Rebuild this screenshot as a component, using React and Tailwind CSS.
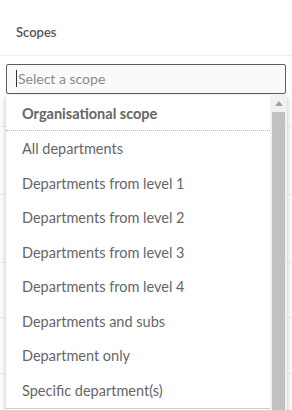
import React from 'react';

const options = [
    'All departments',
    'Departments from level 1',
    'Departments from level 2',
    'Departments from level 3',
    'Departments from level 4',
    'Departments and subs',
    'Department only',
    'Specific department(s)',
];

export default function App() {
    return (
        <div className="w-[292px] h-[410px] bg-white overflow-hidden relative text-[#666]" style={{ fontFamily: 'Lato, "Noto Sans", sans-serif' }}>
            <div className="h-[56px] flex items-center px-4 pt-[10px] border-b border-[#eeeeee]">
                <span className="text-[13px] font-semibold text-[#555]">Scopes</span>
            </div>

            <div className="px-[6px] pt-[8px]">
                <div className="h-[30px] border border-[#5f5f5f] rounded-[2px] bg-[#fafafa] flex items-center pl-[9px] pb-px">
                    <span className="w-px h-[17px] bg-[#333] mr-px"></span>
                    <span className="text-[14px] text-[#8a8a8a]">Select a scope</span>
                </div>
            </div>

            {/* background table rows */}
            <div className="flex flex-col">
                <div className="h-[33px] border-b border-[#eeeeee]"></div>
                <div className="h-[68px] border-b border-[#eeeeee]"></div>
                <div className="h-[68px] border-b border-[#eeeeee]"></div>
                <div className="h-[55px] border-b border-[#eeeeee]"></div>
                <div className="h-[56px] border-b border-[#eeeeee]"></div>
            </div>

            <div className="absolute left-[6px] top-[95px] w-[281px] h-[320px] bg-white flex shadow-[0_2px_6px_rgba(0,0,0,0.25)]">
                <div className="flex-1 flex flex-col overflow-hidden">
                    <div className="h-[36px] shrink-0 flex items-center px-4 pt-[3px] border-b border-dotted border-[#bbbbbb] text-[14.5px] font-bold text-[#666]">
                        Organisational scope
                    </div>
                    {options.map((o) => (
                        <div key={o} className="h-[34.5px] shrink-0 flex items-center px-4 pt-[2px] text-[14.5px] text-[#666]">
                            {o}
                        </div>
                    ))}
                    <div className="shrink-0 mt-[0.5px] border-t border-[#cccccc] h-[10px]"></div>
                </div>
                <div className="w-[17px] bg-[#f1f1f1] flex flex-col items-center">
                    <div className="h-[17px] flex items-center justify-center">
                        <svg width="8" height="5" viewBox="0 0 8 5"><path d="M0 5 L4 0 L8 5 Z" fill="#a3a3a3" /></svg>
                    </div>
                    <div className="w-[13px] flex-1 bg-[#c1c1c1]"></div>
                </div>
            </div>
        </div>
    );
}
